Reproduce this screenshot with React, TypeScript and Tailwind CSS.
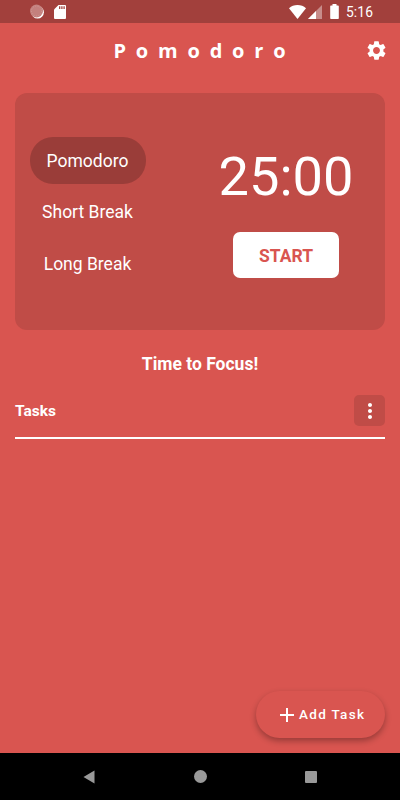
import { useState } from 'react';
import { MdAdd, MdMoreVert, MdSettings } from 'react-icons/md';

const MODES = ['Pomodoro', 'Short Break', 'Long Break'];

const StatusBar = () => (
    <div className="h-[23px] shrink-0 bg-[#a2403c] flex items-center pl-[30px] pr-[27px] text-white">
        {/* Sync spinner */}
        <svg width="14" height="15" viewBox="0 0 14 15">
            <circle cx="7.6" cy="8.2" r="6.3" fill="#fff" />
            <circle cx="6.5" cy="7" r="6.5" fill="#c4807d" />
            <circle cx="6.5" cy="7" r="5" fill="none" stroke="#d09a97" strokeWidth="1" strokeDasharray="1 1.4" />
        </svg>
        {/* SD card */}
        <svg className="ml-[10px]" width="12" height="14" viewBox="0 0 12 14">
            <path d="M4.5 0H11a1 1 0 0 1 1 1v12a1 1 0 0 1-1 1H1a1 1 0 0 1-1-1V4.5z" fill="#fff" />
            <path d="M5.7 1.3v2.7M7.9 1.3v2.7M10.1 1.3v2.7" stroke="#a2403c" strokeWidth="1.3" />
        </svg>
        {/* Wifi */}
        <svg className="ml-auto" width="17" height="14" viewBox="0 0 18 14" preserveAspectRatio="none">
            <path d="M9 14 0 3.2C2.5 1 5.5 0 9 0s6.5 1 9 3.2z" fill="#fff" />
        </svg>
        {/* Signal */}
        <svg className="ml-[2px]" width="14" height="14" viewBox="0 0 14 14">
            <path d="M14 0v14H0z" fill="#c78c8a" />
            <path d="M8 6v8H0z" fill="#fff" />
        </svg>
        {/* Battery */}
        <svg className="ml-[8px]" width="9" height="15" viewBox="0 0 9 15">
            <path d="M2.5 0h4v1.5H8a.8.8 0 0 1 .8.8v11.9a.8.8 0 0 1-.8.8H1a.8.8 0 0 1-.8-.8V2.3a.8.8 0 0 1 .8-.8h1.5z" fill="#fff" />
        </svg>
        <span className="ml-[7px] mt-[2px] text-[13.8px] leading-none tracking-[0.1px]">5:16</span>
    </div>
);

const NavBar = () => (
    <div className="h-[47px] shrink-0 bg-black flex items-center justify-between px-[83px]">
        <svg width="12" height="14" viewBox="0 0 12 14">
            <path d="M11.5.5v13L.5 7z" fill="#999" />
        </svg>
        <div className="size-[13px] rounded-full bg-[#999]" />
        <div className="size-[12px] rounded-[1px] bg-[#999]" />
    </div>
);

export default function App() {
    const [mode, setMode] = useState('Pomodoro');

    return (
        <div className="w-[400px] h-[800px] flex flex-col overflow-hidden bg-[#d95550] text-white font-[family-name:Roboto,sans-serif]">
            <StatusBar />

            <header className="h-[70px] shrink-0 flex items-start justify-between pt-[14px] pl-[113.5px] pr-[12px]">
                <h1 className="font-['Open_Sans',sans-serif] font-bold text-[20px] leading-[28px] tracking-[9.8px] whitespace-nowrap">Pomodoro</h1>
                <button className="mt-[2px]">
                    <MdSettings size={23} />
                </button>
            </header>

            {/* Timer card */}
            <section className="mx-[15px] h-[237px] shrink-0 rounded-[12px] bg-[#c04c47] flex">
                <div className="ml-[15px] w-[116px] pt-[44px] flex flex-col gap-[5px]">
                    {MODES.map((m) => (
                        <button
                            key={m}
                            onClick={() => setMode(m)}
                            className={`h-[46.5px] rounded-[23px] pr-[1px] pt-[1px] text-[17.5px] whitespace-nowrap ${m === mode ? 'bg-[#9a3d39]' : ''}`}
                        >
                            {m}
                        </button>
                    ))}
                </div>
                <div className="ml-[40px] w-[200px] pt-[52px] -mr-2 flex flex-col items-center">
                    <div className="text-[54.2px] leading-[64px]">25:00</div>
                    <button className="mt-[23px] w-[106px] h-[46px] rounded-[7px] bg-white text-[#d95550] text-[17.5px] pt-[2px] font-bold">
                        START
                    </button>
                </div>
            </section>

            <p className="mt-[21px] text-center text-[17.5px] leading-[26px] font-bold">Time to Focus!</p>

            {/* Tasks header */}
            <div className="mx-[15px] mt-[18px] h-[44px] flex items-start justify-between border-b-2 border-white">
                <h2 className="text-[15.5px] leading-[33px] font-bold">Tasks</h2>
                <button className="size-[31px] rounded-[5px] bg-[#c04c47] flex items-center justify-center">
                    <MdMoreVert size={24} />
                </button>
            </div>

            <div className="flex-1 flex items-end justify-end pr-[15px] pb-[15px]">
                <button className="w-[129px] h-[47px] rounded-full bg-[#d95550] shadow-[0_3px_6px_rgba(0,0,0,0.3)] flex items-center pl-[19px]">
                    <MdAdd size={24} />
                    <span className="text-[13.5px] font-medium tracking-[1.3px] whitespace-nowrap">Add Task</span>
                </button>
            </div>

            <NavBar />
        </div>
    );
}
